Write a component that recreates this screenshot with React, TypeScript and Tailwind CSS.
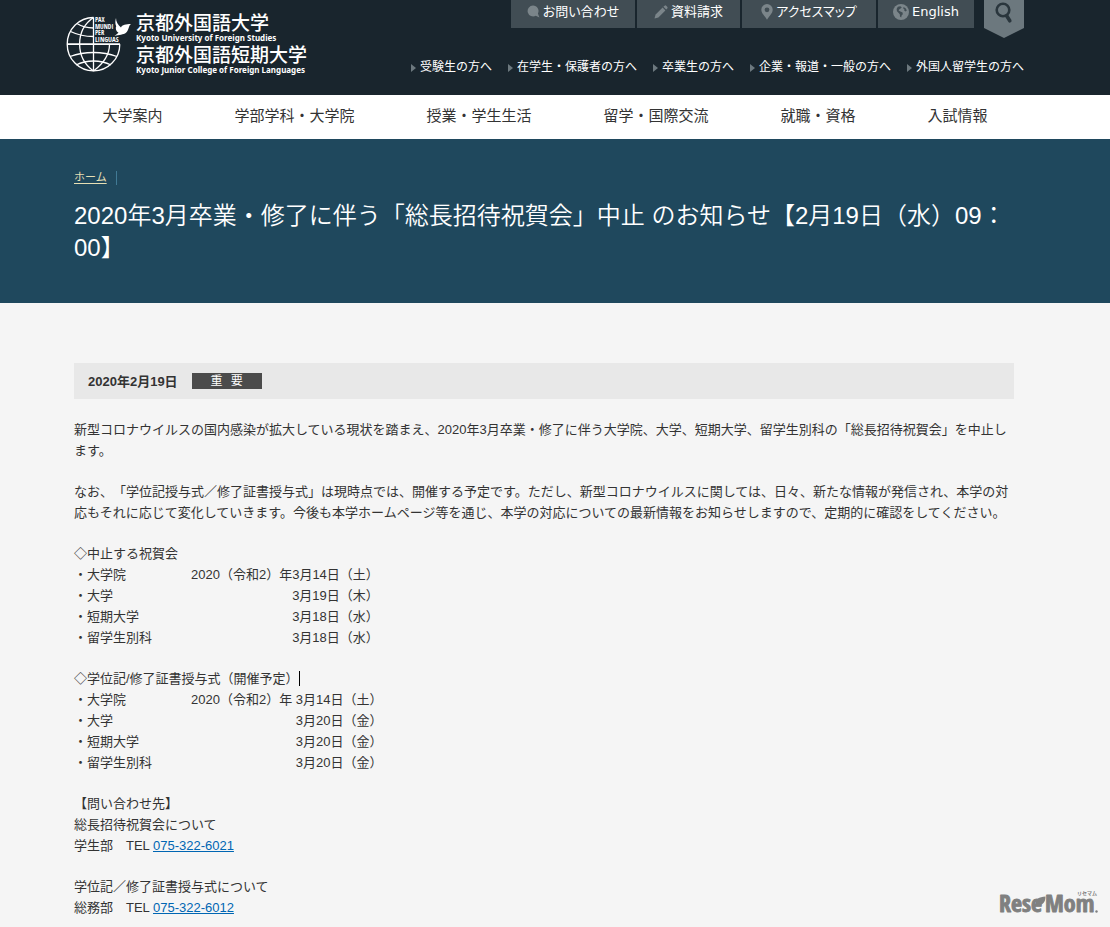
import React from "react";

const utilityLinks = [
  { label: "お問い合わせ", icon: "bubble", width: "w-[124px]" },
  { label: "資料請求", icon: "pencil", width: "w-[103px]" },
  { label: "アクセスマップ", icon: "pin", width: "w-[134px]" },
  { label: "English", icon: "globe", width: "w-[96px]" },
];

const audienceLinks = [
  "受験生の方へ",
  "在学生・保護者の方へ",
  "卒業生の方へ",
  "企業・報道・一般の方へ",
  "外国人留学生の方へ",
];

const mainNav = [
  "大学案内",
  "学部学科・大学院",
  "授業・学生生活",
  "留学・国際交流",
  "就職・資格",
  "入試情報",
];

const cancelled = [
  ["・大学院", "2020（令和2）年3月14日（土）"],
  ["・大学", "3月19日（木）"],
  ["・短期大学", "3月18日（水）"],
  ["・留学生別科", "3月18日（水）"],
];

const planned = [
  ["・大学院", "2020（令和2）年 3月14日（土）"],
  ["・大学", "3月20日（金）"],
  ["・短期大学", "3月20日（金）"],
  ["・留学生別科", "3月20日（金）"],
];

function UtilityIcon({ name }: { name: string }) {
  if (name === "bubble") {
    return (
      <svg className="h-[13px] w-[13px] shrink-0" viewBox="0 0 13 13" fill="#7b858a" aria-hidden="true">
        <path d="M6 0.500a5.500 5.500 0 1 0 2.800 10.300L12.400 12.600 10.900 8.600A5.500 5.500 0 0 0 6 0.500z" />
      </svg>
    );
  }
  if (name === "pencil") {
    return (
      <svg className="h-[14px] w-[14px] shrink-0" viewBox="0 0 14 14" fill="#7b858a" aria-hidden="true">
        <path d="M0.500 13.500 1.600 9.600 8.600 2.600 11.400 5.400 4.400 12.400z" />
        <path d="M9.400 1.800 10.600 0.700Q11.400 0 12.200 0.800L13.200 1.800Q14 2.600 13.300 3.400L12.200 4.600z" />
      </svg>
    );
  }
  if (name === "pin") {
    return (
      <svg className="h-4 w-3 shrink-0" viewBox="0 0 12 16" fill="#7b858a" aria-hidden="true">
        <path
          fillRule="evenodd"
          d="M6 0a5.700 5.700 0 0 0-5.700 5.700C0.300 9.500 4 12 6 15.800 8 12 11.700 9.500 11.700 5.700A5.700 5.700 0 0 0 6 0zM6 3.400a2.400 2.400 0 1 1 0 4.800 2.400 2.400 0 0 1 0-4.800z"
        />
      </svg>
    );
  }
  return (
    <svg className="h-4 w-4 shrink-0" viewBox="0 0 16 16" aria-hidden="true">
      <circle cx="8" cy="8" r="8" fill="#7b858a" />
      <path d="M4.800 2.800 7.200 2.300 8.800 3.200 7.600 4.600 6.400 5.200 5.600 6.600 7.400 7.600 9.600 8.600 9.800 10.200 8.600 11.400 8.200 13.600 7 12.400 6.800 10.200 5.400 8.800 4 7.200 3.600 5z" fill="#414d54" />
      <path d="M10.600 3 12.800 4.400 13.800 6.600 12.600 7.400 11.200 6.600 11.400 5.200 10.200 4.400z" fill="#414d54" />
    </svg>
  );
}

function Emblem() {
  return (
    <svg className="h-[59px] w-[66px] shrink-0" viewBox="66 14 66 59" fill="none" stroke="#fff" aria-hidden="true">
      <g strokeWidth="1.300">
        <path d="M93.500 17.500a26.300 26.700 0 1 0 26.300 26.700" />
        <path d="M93.500 17.500V71" />
        <path d="M93.500 17.500C75 30 75 58 93.500 71" />
        <path d="M93.500 71C108 60 109.500 50 109.500 44.500" />
        <path d="M77 23.500Q84 28 93.500 28" />
        <path d="M70.500 31.500Q81 36.500 93.500 36.500" />
        <path d="M70 56.500Q81 52.500 93.500 52.500T117 56.500" />
        <path d="M76 65Q84 61 93.500 61T111 65" />
      </g>
      <path d="M67 44.200H120" strokeWidth="1.800" />
      <path
        d="M116 18C116 22 118 25 121 27.500 122 24.800 126 24 131 24 128.500 25.500 129 30 126 32.800 123.500 35 119 34.600 114.500 36L118.500 32.800C116 31.500 115.200 28 116.200 26.300 115 23.500 115.200 20.500 116 18z"
        fill="#fff"
        stroke="none"
      />
      <g fill="#fff" stroke="none" fontFamily="Open Sans Condensed, Liberation Sans, sans-serif" fontWeight="700">
        <g fontSize="6.500">
          <text x="95" y="22">PAX</text>
          <text x="95" y="28.700">MUNDI</text>
          <text x="95" y="35.400">PER</text>
        </g>
        <text x="95" y="42.200" fontSize="7">LINGUAS</text>
      </g>
    </svg>
  );
}

function ScheduleTable({ title, rows, caret }: { title: string; rows: string[][]; caret?: boolean }) {
  return (
    <section>
      <h2 className="flex items-center">
        {title}
        {caret && <span className="h-[15px] w-px bg-black" />}
      </h2>
      <table>
        <tbody>
          {rows.map(([name, date]) => (
            <tr key={name}>
              <th scope="row" className="w-[117px] p-0 text-left font-normal">{name}</th>
              <td className="p-0 text-right whitespace-nowrap">{date}</td>
            </tr>
          ))}
        </tbody>
      </table>
    </section>
  );
}

export default function App() {
  return (
    <div className="relative min-h-screen bg-[#f5f5f5] font-['Liberation_Sans','Noto_Sans_CJK_JP',sans-serif] text-[13px] leading-[21px] text-[#333] [text-spacing-trim:space-all]">
      <header>
        <div className="bg-[#19252d] pr-[22px] text-white">
          <div className="mx-auto flex h-[95px] max-w-[960px] items-start justify-between">
            <a href="#" className="flex pt-[14px] pl-[2px] font-['Noto_Sans_CJK_JP',sans-serif]">
              <Emblem />
              <span className="flex flex-col pl-1 whitespace-nowrap">
                <span className="text-[19px] leading-4 font-medium">京都外国語大学</span>
                <span className="font-['Noto_Sans',sans-serif] text-[8px] leading-4 font-bold">Kyoto University of Foreign Studies</span>
                <span className="text-[19px] leading-4 font-medium">京都外国語短期大学</span>
                <span className="font-['Noto_Sans',sans-serif] text-[8px] leading-4 font-bold">Kyoto Junior College of Foreign Languages</span>
              </span>
            </a>
            <div className="flex flex-col items-end">
              <div className="flex h-[38px] items-start">
                <nav className="flex gap-[2px]">
                  {utilityLinks.map((l) => (
                    <a
                      key={l.label}
                      href="#"
                      className={`${l.width} flex h-7 items-center justify-center gap-[3px] bg-[#414d54] pb-[5px] font-['DejaVu_Sans','Noto_Sans_CJK_JP',sans-serif] whitespace-nowrap [font-feature-settings:'palt']`}
                    >
                      <UtilityIcon name={l.icon} />
                      {l.label}
                    </a>
                  ))}
                </nav>
                <button type="button" aria-label="検索" className="ml-[10px] h-[38px] w-10">
                  <svg viewBox="0 0 40 38" className="h-full w-full" aria-hidden="true">
                    <path d="M0 0H40V28L20 38 0 28z" fill="#6c787e" />
                    <circle cx="19" cy="10" r="6.300" fill="none" stroke="#2a363d" strokeWidth="2.600" />
                    <path d="M22.800 16 25.800 20.800" stroke="#2a363d" strokeWidth="3.600" strokeLinecap="round" />
                  </svg>
                </button>
              </div>
              <nav className="flex gap-4 pt-[19px] text-[12px]">
                {audienceLinks.map((label) => (
                  <a key={label} href="#" className="flex items-center gap-1 whitespace-nowrap">
                    <svg className="h-2 w-[5px]" viewBox="0 0 5 8" fill="#6c787e" aria-hidden="true">
                      <path d="M0 0 5 4 0 8z" />
                    </svg>
                    {label}
                  </a>
                ))}
              </nav>
            </div>
          </div>
        </div>
        <nav className="flex h-11 items-center justify-center gap-[72px] bg-white pr-5 pb-1 text-[15px]">
          {mainNav.map((label) => (
            <a key={label} href="#" className="whitespace-nowrap">{label}</a>
          ))}
        </nav>
      </header>

      <div className="bg-[#1f485d] pr-[22px] text-white">
        <div className="mx-auto max-w-[940px] pt-7 pb-[39px]">
          <div className="flex items-center gap-[9px] text-[11px]">
            <a href="#" className="text-[#e6dfb4] underline underline-offset-2">ホーム</a>
            <span className="h-[14px] w-px bg-[#417a95]" />
          </div>
          <h1 className="pt-3 text-[24px] leading-8 font-[350]">
            2020年3月卒業・修了に伴う「総長招待祝賀会」中止 のお知らせ【2月19日（水）09：00】
          </h1>
        </div>
      </div>

      <main className="pr-[22px]">
        <article className="mx-auto flex max-w-[940px] flex-col gap-5 pt-[60px] pb-[9px]">
          <div className="flex h-9 items-center gap-[14px] bg-[#e8e8e8] px-[14px]">
            <time dateTime="2020-02-19" className="font-bold">2020年2月19日</time>
            <span className="flex h-4 w-[70px] items-center justify-center gap-2 bg-[#4b4b4b] text-[12px] text-white">
              <span>重</span>
              <span>要</span>
            </span>
          </div>
          <p>
            新型コロナウイルスの国内感染が拡大している現状を踏まえ、2020年3月卒業・修了に伴う大学院、大学、短期大学、留学生別科の「総長招待祝賀会」を中止します。
          </p>
          <p>
            なお、「学位記授与式／修了証書授与式」は現時点では、開催する予定です。ただし、新型コロナウイルスに関しては、日々、新たな情報が発信され、本学の対応もそれに応じて変化していきます。今後も本学ホームページ等を通じ、本学の対応についての最新情報をお知らせしますので、定期的に確認をしてください。
          </p>
          <ScheduleTable title="◇中止する祝賀会" rows={cancelled} />
          <ScheduleTable title="◇学位記/修了証書授与式（開催予定）" rows={planned} caret />
          <p>
            【問い合わせ先】
            <br />
            総長招待祝賀会について
            <br />
            学生部　TEL <a href="tel:075-322-6021" className="text-[#0066b3] underline">075-322-6021</a>
          </p>
          <p>
            学位記／修了証書授与式について
            <br />
            総務部　TEL <a href="tel:075-322-6012" className="text-[#0066b3] underline">075-322-6012</a>
          </p>
        </article>
      </main>

      <svg className="absolute right-2 bottom-1 h-10 w-[104px]" viewBox="0 0 104 40" role="img" aria-label="ReseMom リセマム">
        <g fill="#808080" fontWeight="700">
          <g fontSize="24" fontFamily="Open Sans Condensed, Liberation Sans, sans-serif" stroke="#808080" strokeWidth="0.900" strokeLinejoin="round">
            <text x="1" y="29">Rese</text>
            <text x="47" y="29">Mom</text>
          </g>
          <path d="M38 21C37 16 41 14 47.500 13.500 47.500 19 45 22.500 39 22.500z" />
          <circle cx="98.500" cy="28.500" r="1.200" />
          <text x="79" y="12" fontSize="5" fontFamily="Noto Sans CJK JP, sans-serif">リセマム</text>
        </g>
      </svg>
    </div>
  );
}
